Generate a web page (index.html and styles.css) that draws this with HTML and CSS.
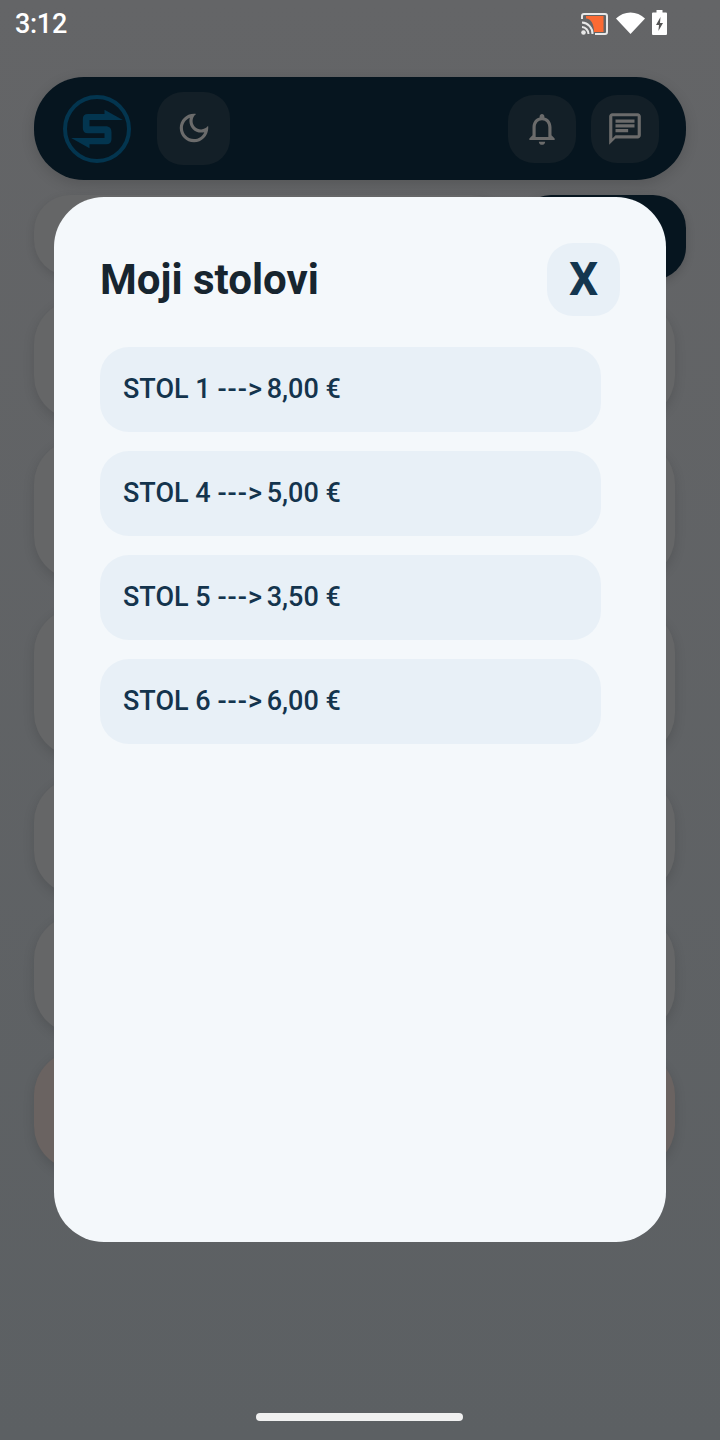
FILE: index.html
```html
<!DOCTYPE html>
<html>
<head>
    <title>Moji stolovi</title>
    <link rel="stylesheet" href="styles.css">
</head>
<body>
    <div class="status-bar">
        <span class="time">3:12</span>
        <div class="status-icons">
            <svg class="icon-cast" viewBox="0 0 27 22">
                <path class="cast-fill" d="M5 3h17.500v16H13C13 11 10 5.500 5 5.500z"/>
                <path class="cast-frame" d="M1 6V3a2 2 0 0 1 2-2h21a2 2 0 0 1 2 2v16a2 2 0 0 1-2 2H14"/>
                <path class="cast-wave" d="M1 9.500A11 11 0 0 1 11.500 21M1 14a7 7 0 0 1 6.500 7"/>
                <circle class="cast-dot" cx="2.500" cy="19.500" r="2.300"/>
            </svg>
            <svg class="icon-wifi" viewBox="0 0 29 22">
                <path d="M14.500 22L0 6.500C4 2.500 9 .5 14.500.5S25 2.500 29 6.500z"/>
            </svg>
            <svg class="icon-battery" viewBox="0 0 15 25">
                <path class="battery-body" d="M4.500 0h6v2.500H14a1 1 0 0 1 1 1V24a1 1 0 0 1-1 1H1a1 1 0 0 1-1-1V3.500a1 1 0 0 1 1-1h3.500z"/>
                <path class="battery-bolt" d="M8.500 7L4 15h3l-.6 6L11 13H8z"/>
            </svg>
        </div>
    </div>

    <div class="nav">
        <svg class="logo" viewBox="34.500 22 216 216">
            <circle class="logo-ring" cx="142.500" cy="130" r="96"/>
            <path class="logo-s" d="M220 103H120v19h52q14 2 14 18v20q0 16-16 16h-50v12l-55-31h100v-14h-50q-15 0-15-15v-28q0-15 15-15h50V72z"/>
        </svg>
        <div class="tile tile-moon">
            <svg class="icon" viewBox="0 0 24 24"><path d="M9.370 5.510C9.190 6.150 9.100 6.820 9.100 7.500c0 4.080 3.320 7.400 7.400 7.400.68 0 1.350-.09 1.990-.27C17.450 17.190 14.930 19 12 19c-3.860 0-7-3.140-7-7C5 9.070 6.810 6.550 9.370 5.510zM12 3c-4.970 0-9 4.030-9 9s4.030 9 9 9 9-4.030 9-9c0-.46-.04-.92-.1-1.360-.98 1.370-2.580 2.260-4.400 2.260-2.980 0-5.400-2.420-5.400-5.400 0-1.810.89-3.420 2.260-4.400C12.920 3.040 12.460 3 12 3z"/></svg>
        </div>
        <div class="tile tile-bell">
            <svg class="icon" viewBox="0 0 24 24"><path d="M12 22c1.100 0 2-.9 2-2h-4c0 1.100.9 2 2 2zm6-6v-5c0-3.070-1.630-5.640-4.500-6.320V4c0-.83-.67-1.500-1.500-1.500s-1.500.67-1.500 1.500v.68C7.640 5.360 6 7.920 6 11v5l-2 2v1h16v-1l-2-2zm-2 1H8v-6c0-2.480 1.510-4.500 4-4.500s4 2.020 4 4.500v6z"/></svg>
        </div>
        <div class="tile tile-chat">
            <svg class="icon" viewBox="0 0 24 24"><path d="M20 2H4c-1.100 0-2 .9-2 2v18l4-4h14c1.100 0 2-.9 2-2V4c0-1.100-.9-2-2-2zm0 14H6l-2 2V4h16v12zM6 12h8v2H6zM6 9h12v2H6zM6 6h12v2H6z"/></svg>
        </div>
    </div>

    <div class="top-row">
        <div class="balance"></div>
        <div class="balance-dark"></div>
    </div>

    <div class="cards">
        <div class="card card-1"></div>
        <div class="card card-2"></div>
        <div class="card card-3"></div>
        <div class="card card-4"></div>
        <div class="card card-5"></div>
        <div class="card card-6"></div>
    </div>

    <div class="home-bar"></div>

    <div class="modal">
        <div class="modal-header">
            <h1>Moji stolovi</h1>
            <div class="close">X</div>
        </div>
        <div class="table-list">
            <div class="table-row">STOL 1 <span class="arrow">---&gt;</span> 8,00 €</div>
            <div class="table-row">STOL 4 <span class="arrow">---&gt;</span> 5,00 €</div>
            <div class="table-row">STOL 5 <span class="arrow">---&gt;</span> 3,50 €</div>
            <div class="table-row">STOL 6 <span class="arrow">---&gt;</span> 6,00 €</div>
        </div>
    </div>
</body>
</html>
```

FILE: styles.css
```css
html, body {
    margin: 0;
    height: 1440px;
}
body {
    position: relative;
    display: flex;
    flex-direction: column;
    overflow: hidden;
    font-family: Roboto, "Noto Sans", sans-serif;
    background: linear-gradient(180deg, #646567, #5c6063);
}
.status-bar {
    display: flex;
    justify-content: space-between;
    align-items: center;
    height: 48px;
    padding: 0 53px 0 15px;
}
.time {
    color: #fff;
    font-size: 27px;
    font-weight: 500;
    letter-spacing: -0.3px;
}
.status-icons {
    display: flex;
    align-items: flex-end;
    margin-bottom: 3px;
}
.icon-cast {
    width: 27px;
    height: 22px;
}
.cast-fill {
    fill: #fb6a33;
}
.cast-frame, .cast-wave {
    fill: none;
    stroke: #e8e8e8;
    stroke-width: 2;
}
.cast-dot {
    fill: #e8e8e8;
}
.icon-wifi {
    width: 29px;
    height: 22px;
    margin: 0 0 1px 8px;
    fill: #fff;
}
.icon-battery {
    width: 15px;
    height: 25px;
    margin-left: 7px;
}
.battery-body {
    fill: #fff;
}
.battery-bolt {
    fill: #555;
}

.nav {
    display: flex;
    align-items: center;
    height: 103px;
    margin: 29px 34px 0;
    padding: 0 27px 0 27px;
    border-radius: 50px;
    background: #06151f;
    box-shadow: 0 4px 14px rgba(0, 0, 0, 0.14);
}
.logo {
    width: 72px;
    height: 72px;
    flex: none;
}
.logo-ring {
    fill: none;
    stroke: #03354f;
    stroke-width: 12;
}
.logo-s {
    fill: #03354f;
}
.tile {
    display: flex;
    align-items: center;
    justify-content: center;
    width: 68px;
    height: 68px;
    border-radius: 26px;
    background: #131f27;
}
.tile-moon {
    width: 73px;
    height: 73px;
    margin-left: 24px;
    margin-top: -1px;
}
.tile-bell {
    margin-left: auto;
    margin-top: 1px;
}
.tile-chat {
    margin-left: 15px;
    margin-top: 1px;
}
.icon {
    width: 38px;
    height: 38px;
    fill: #6b6b6b;
}

.top-row {
    display: flex;
    align-items: flex-start;
    gap: 10px;
    margin: 15px 34px 0;
}
.balance {
    flex: 1;
    height: 81px;
    border-radius: 36px;
    background: #656667;
    box-shadow: 0 3px 10px rgba(0, 0, 0, 0.12);
}
.balance-dark {
    width: 168px;
    height: 85px;
    border-radius: 33px;
    background: #06151f;
    box-shadow: 0 3px 10px rgba(0, 0, 0, 0.16);
}
.cards {
    display: flex;
    flex-direction: column;
    margin: 20px 45px 0 34px;
}
.card {
    border-radius: 44px;
    background: #656667;
    box-shadow: 0 4px 12px rgba(0, 0, 0, 0.13);
}
.card-1 {
    height: 120px;
}
.card-2 {
    height: 140px;
    margin-top: 20px;
}
.card-3 {
    height: 149px;
    margin-top: 28px;
}
.card-4 {
    height: 117px;
    margin-top: 21px;
}
.card-5 {
    height: 119px;
    margin-top: 20px;
}
.card-6 {
    height: 119px;
    margin-top: 17px;
    background: #6a6361;
}
.home-bar {
    width: 207px;
    height: 8px;
    margin: auto 0 19px 256px;
    border-radius: 4px;
    background: #f0f0f0;
}

.modal {
    position: absolute;
    left: 54px;
    top: 197px;
    width: 612px;
    height: 1045px;
    box-sizing: border-box;
    padding: 46px 46px 0;
    border-radius: 50px;
    background: #f4f8fb;
}
.modal-header {
    display: flex;
    justify-content: space-between;
    align-items: center;
    height: 73px;
}
.modal-header h1 {
    margin: 0;
    font-size: 42px;
    font-weight: 700;
    color: #17252f;
}
.close {
    display: flex;
    align-items: center;
    justify-content: center;
    box-sizing: border-box;
    width: 73px;
    height: 73px;
    padding-bottom: 2px;
    border-radius: 26px;
    background: #e8f0f7;
    color: #14364f;
    font-size: 46px;
    font-weight: 700;
}
.table-list {
    display: flex;
    flex-direction: column;
    gap: 19px;
    width: 501px;
    margin-top: 31px;
}
.table-row {
    display: block;
    box-sizing: border-box;
    height: 85px;
    padding-left: 23px;
    line-height: 85px;
    border-radius: 29px;
    background: #e8f0f7;
    color: #14344d;
    font-size: 27px;
    font-weight: 500;
}
.arrow {
    letter-spacing: 1px;
    margin-right: -3px;
}
```
